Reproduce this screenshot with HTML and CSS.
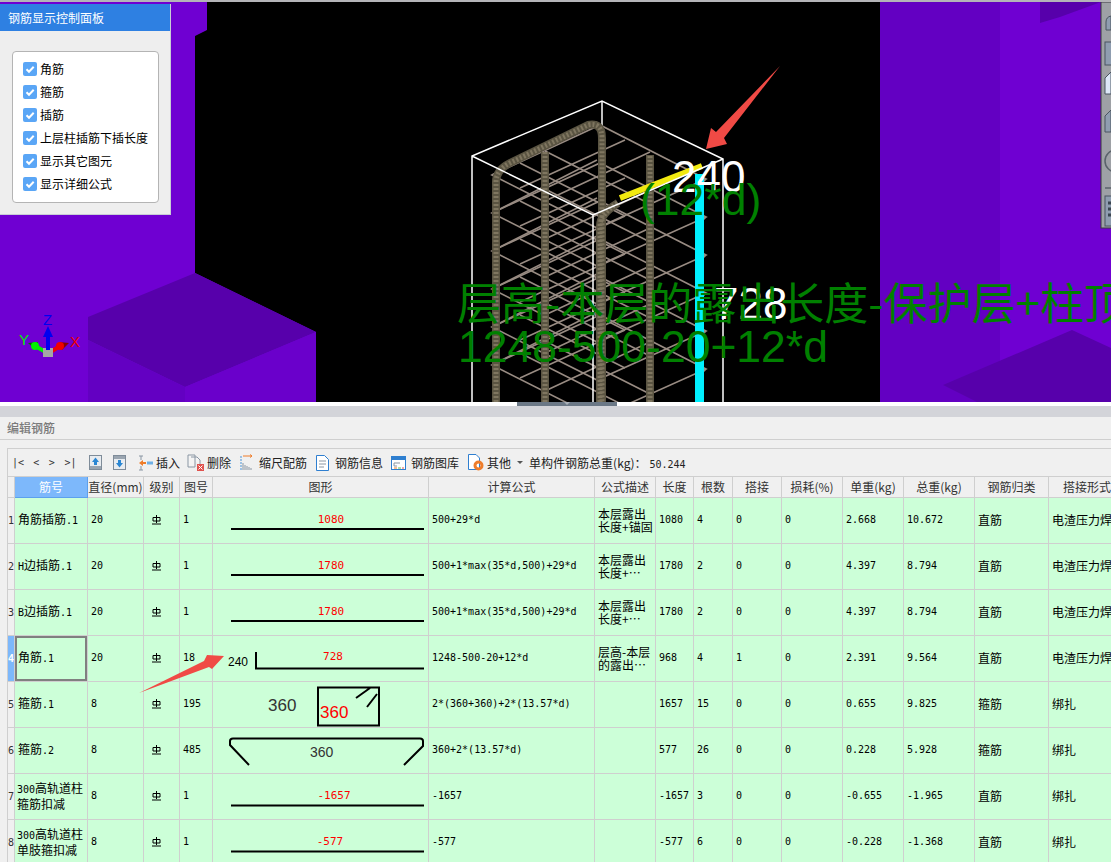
FILE: index.html
```html
<!DOCTYPE html>
<html lang="zh-CN">
<head>
<meta charset="utf-8">
<title>编辑钢筋</title>
<link rel="stylesheet" href="styles.css">
</head>
<body>
<div class="page">
  <svg class="defs" width="0" height="0" aria-hidden="true">
    <defs>
      <symbol id="grade" viewBox="0 0 9 10">
        <path d="M4.5 0V8M1 2.5H8V6H1ZM0 9H9" fill="none" stroke="#000" stroke-width="1"/>
      </symbol>
    </defs>
  </svg>

  <section class="viewport">
    <svg class="scene" viewBox="0 2 1111 400" width="1111" height="400">
      <defs>
        <g id="stirrup" fill="none" stroke="#998c83" stroke-width="1.6">
          <path d="M492 175L600 125L706 179L597 228Z"/>
          <path d="M545 151L650 204M650 152L545 201M520 163L625 216M625 140L520 188M492 175L597 122"/>
          <path d="M597 228V240M706 179l-4 4"/>
        </g>
      </defs>
      <rect class="s-purple" x="0" y="2" width="1111" height="400"/>
      <polygon class="s-deep" points="880,2 1000,2 1000,402 880,402"/>
      <polygon points="207,2 880,2 880,402 316,402 316,332 195,273 195,36 207,30"/>
      <polygon class="s-dark" points="195,273 316,332 185,387 88,340 88,317"/>
      <polygon class="s-deep" points="88,340 185,387 185,402 88,402"/>
      <polygon class="s-face" points="185,387 316,332 316,402 185,402"/>
      <polygon class="s-dark" points="943,385 1072,330 1111,348 1111,402 977,402"/>
      <polygon class="s-dark" points="1040,2 1101,2 1060,17 1040,23"/>

      <path class="wire" d="M602 101V132"/>
      <use href="#stirrup"/>
      <use href="#stirrup" y="38"/>
      <use href="#stirrup" y="76"/>
      <use href="#stirrup" y="114"/>
      <use href="#stirrup" y="152"/>
      <use href="#stirrup" y="190"/>

      <g class="bar-base">
        <path d="M496 402V182Q496 170 510 163L588 125Q602 122 602 138V402"/>
        <path d="M545 402V152"/>
        <path d="M650 402V155"/>
        <path d="M600 402V226Q600 214 618 203"/>
      </g>
      <g class="bar-rib">
        <path d="M496 402V182Q496 170 510 163L588 125Q602 122 602 138V402"/>
        <path d="M545 402V152"/>
        <path d="M650 402V155"/>
        <path d="M600 402V226Q600 214 618 203"/>
      </g>
      <rect class="s-cyan" x="695" y="174" width="9" height="228"/>
      <path class="s-yellow" d="M620 198L702 166"/>
      <path class="wire" d="M472 402V156L602 101L723 159V402M472 156L593 215L723 159M593 215V402"/>

      <text class="t-white" x="672" y="192">240</text>
      <text class="t-white" x="714" y="319">728</text>
      <text class="t-green" x="640" y="215">(12*d)</text>
      <text class="t-green t-cjk" x="457" y="320">层高-本层的露出长度-保护层+柱顶</text>
      <text class="t-green" x="458" y="362">1248-500-20+12*d</text>

      <polygon class="s-arrow" points="780,66 724,138 727,144 706,149 711,128 716,132"/>

      <polygon class="ax-g2" points="28,343 38,342 36,350"/>
      <path class="ax-gs" d="M35 346L44 351"/>
      <circle class="ax-g" cx="35" cy="346" r="4"/>
      <polygon class="ax-r2" points="69,343 59,342 62,350"/>
      <path class="ax-rs" d="M60 346L52 351"/>
      <circle class="ax-r" cx="60" cy="346" r="4"/>
      <rect class="ax-c" x="43" y="348" width="10" height="9"/>
      <rect class="ax-b" x="46" y="335" width="4" height="15"/>
      <polygon class="ax-b" points="48,326 53,337 43,337"/>
      <text class="ax-t ax-tb" x="43" y="325">Z</text>
      <text class="ax-t ax-tg" x="19" y="345">Y</text>
      <text class="ax-t ax-tr" x="70" y="347">X</text>

      <rect class="tool" x="1101" y="2" width="12" height="226"/>
      <g class="tool-i">
        <path d="M1106 30V22Q1106 17 1111 16V30Z"/>
        <rect x="1105" y="42" width="8" height="23"/>
        <path class="tool-l" d="M1105 94V78L1111 72V94Z"/>
        <path d="M1105 132V116L1111 110V132Z"/>
        <circle class="tool-c" cx="1116" cy="161" r="11"/>
        <path class="tool-c" d="M1105 188H1111"/>
        <rect x="1105" y="196" width="8" height="30"/>
        <path class="tool-d" d="M1108 203H1111M1108 209H1111M1108 215H1111"/>
      </g>
    </svg>

    <aside class="ctl">
      <h2 class="ctl-h">钢筋显示控制面板</h2>
      <div class="ctl-b">
        <div class="ctl-box">
          <label class="ck"><svg class="ck-i" viewBox="0 0 14 14"><rect width="14" height="14" rx="2"/><path d="M3.5 7.2L6 9.7L10.7 4.8"/></svg>角筋</label>
          <label class="ck"><svg class="ck-i" viewBox="0 0 14 14"><rect width="14" height="14" rx="2"/><path d="M3.5 7.2L6 9.7L10.7 4.8"/></svg>箍筋</label>
          <label class="ck"><svg class="ck-i" viewBox="0 0 14 14"><rect width="14" height="14" rx="2"/><path d="M3.5 7.2L6 9.7L10.7 4.8"/></svg>插筋</label>
          <label class="ck"><svg class="ck-i" viewBox="0 0 14 14"><rect width="14" height="14" rx="2"/><path d="M3.5 7.2L6 9.7L10.7 4.8"/></svg>上层柱插筋下插长度</label>
          <label class="ck"><svg class="ck-i" viewBox="0 0 14 14"><rect width="14" height="14" rx="2"/><path d="M3.5 7.2L6 9.7L10.7 4.8"/></svg>显示其它图元</label>
          <label class="ck"><svg class="ck-i" viewBox="0 0 14 14"><rect width="14" height="14" rx="2"/><path d="M3.5 7.2L6 9.7L10.7 4.8"/></svg>显示详细公式</label>
        </div>
      </div>
    </aside>
  </section>

  <div class="gap"><span class="grip"></span></div>
  <div class="splitter"></div>

  <section class="editor">
    <h3 class="ed-title">编辑钢筋</h3>
    <div class="frame">
      <div class="toolbar">
        <span class="nav"><span>|&lt;</span><span>&lt;</span><span>&gt;</span><span>&gt;|</span></span>
        <svg class="ic ic-up" width="13" height="15" viewBox="0 0 13 15"><rect x=".5" y=".5" width="12" height="14" fill="#e8ecf0" stroke="#7f8c99"/><rect x="1" y="11" width="11" height="3" fill="#9aa5b0"/><path d="M6.5 2.5L10 7H8V10H5V7H3Z" fill="#2b87d3"/></svg>
        <svg class="ic ic-down" width="13" height="15" viewBox="0 0 13 15"><rect x=".5" y=".5" width="12" height="14" fill="#e8ecf0" stroke="#7f8c99"/><rect x="1" y="1" width="11" height="3" fill="#9aa5b0"/><path d="M6.5 12.5L10 8H8V5H5V8H3Z" fill="#2b87d3"/></svg>
        <span class="tb tb-ins"><svg width="15" height="16" viewBox="0 0 15 16"><path d="M1 1H5M1 15H5M3 1V5M3 11V15" stroke="#8a96a3" fill="none"/><path d="M1 8L5 5V7H8V9H5V11Z" fill="#ee7d2b"/><rect x="9" y="6.5" width="6" height="3" fill="#6fb0e6"/></svg><span>插入</span></span>
        <span class="tb tb-del"><svg width="17" height="17" viewBox="0 0 17 17"><path d="M1 1H8V13H1ZM4 3H10L13 6V11" fill="#f4f4f4" stroke="#8a96a3"/><rect x="10" y="10" width="7" height="7" fill="#e0524d"/><path d="M11.500 11.500L15.500 15.500M15.500 11.500L11.500 15.500" stroke="#fff"/></svg><span>删除</span></span>
        <span class="tb tb-scale"><svg width="13" height="17" viewBox="0 0 13 17"><path d="M1 2V16" stroke="#4a93d6" stroke-dasharray="2 1" fill="none"/><path d="M3 2H12M10 0.500L12 2L10 3.500" stroke="#ee7d2b" fill="none"/><path d="M3 9V16M5 11V16M7 12V16M9 13V16M11 14V16" stroke="#8a96a3"/></svg><span>缩尺配筋</span></span>
        <span class="tb tb-info"><svg width="13" height="16" viewBox="0 0 13 16"><path d="M.5.5H8.5L12.5 4.500V15.500H.5Z" fill="#fff" stroke="#2f7fd0"/><path d="M3 6H10M3 9H10M3 12H8" stroke="#8a96a3"/></svg><span>钢筋信息</span></span>
        <span class="tb tb-lib"><svg width="15" height="14" viewBox="0 0 15 14"><rect x=".5" y=".5" width="14" height="13" fill="#fff" stroke="#2f7fd0"/><rect x="1" y="1" width="13" height="3" fill="#2f7fd0"/><path d="M3 7H9M3 7V10H6" stroke="#8a96a3" fill="none"/><path d="M3 12H6" stroke="#ee7d2b"/><path d="M7 12H10" stroke="#6cc04a"/><path d="M11 12H13" stroke="#e0524d"/></svg><span>钢筋图库</span></span>
        <span class="tb tb-oth"><svg width="16" height="17" viewBox="0 0 16 17"><path d="M.5.5H8L11.500 4V15.500H.5Z" fill="#fff" stroke="#2f7fd0"/><circle cx="10.500" cy="11.500" r="3.500" fill="none" stroke="#ee7d2b" stroke-width="3"/></svg><span>其他</span></span>
        <span class="caret"></span>
        <span class="tb-total">单构件钢筋总重(kg)：<span class="n tt-n">50.244</span></span>
      </div>

      <table class="grid">
        <colgroup>
          <col class="w0"><col class="w1"><col class="w2"><col class="w3"><col class="w4"><col class="w5"><col class="w6"><col class="w7"><col class="w8"><col class="w9"><col class="w10"><col class="w11"><col class="w12"><col class="w13"><col class="w14"><col class="w15">
        </colgroup>
        <thead>
          <tr>
            <th class="rh"></th><th class="active">筋号</th><th>直径(mm)</th><th>级别</th><th>图号</th><th>图形</th><th>计算公式</th><th>公式描述</th><th>长度</th><th>根数</th><th>搭接</th><th>损耗(%)</th><th>单重(kg)</th><th>总重(kg)</th><th>钢筋归类</th><th>搭接形式</th>
          </tr>
        </thead>
        <tbody>
          <tr>
            <td class="rh">1</td><td>角筋插筋<span class="n">.1</span></td><td class="n">20</td><td><svg class="grade"><use href="#grade"/></svg></td><td class="n">1</td>
            <td class="sh"><svg class="shape" viewBox="213 497 215 45"><text class="s-red" x="331" y="522">1080</text><path class="s-line" d="M231 528H424"/></svg></td>
            <td class="n">500+29*d</td><td class="ds">本层露出<br>长度+锚固</td><td class="n">1080</td><td class="n">4</td><td class="n">0</td><td class="n">0</td><td class="n">2.668</td><td class="n">10.672</td><td>直筋</td><td>电渣压力焊</td>
          </tr>
          <tr>
            <td class="rh">2</td><td><span class="n">H</span>边插筋<span class="n">.1</span></td><td class="n">20</td><td><svg class="grade"><use href="#grade"/></svg></td><td class="n">1</td>
            <td class="sh"><svg class="shape" viewBox="213 543 215 45"><text class="s-red" x="331" y="568">1780</text><path class="s-line" d="M231 574H424"/></svg></td>
            <td class="n">500+1*max(35*d,500)+29*d</td><td class="ds">本层露出<br>长度+…</td><td class="n">1780</td><td class="n">2</td><td class="n">0</td><td class="n">0</td><td class="n">4.397</td><td class="n">8.794</td><td>直筋</td><td>电渣压力焊</td>
          </tr>
          <tr>
            <td class="rh">3</td><td><span class="n">B</span>边插筋<span class="n">.1</span></td><td class="n">20</td><td><svg class="grade"><use href="#grade"/></svg></td><td class="n">1</td>
            <td class="sh"><svg class="shape" viewBox="213 589 215 45"><text class="s-red" x="331" y="614">1780</text><path class="s-line" d="M231 620H424"/></svg></td>
            <td class="n">500+1*max(35*d,500)+29*d</td><td class="ds">本层露出<br>长度+…</td><td class="n">1780</td><td class="n">2</td><td class="n">0</td><td class="n">0</td><td class="n">4.397</td><td class="n">8.794</td><td>直筋</td><td>电渣压力焊</td>
          </tr>
          <tr>
            <td class="rh rh-on">4</td><td class="sel">角筋<span class="n">.1</span></td><td class="n">20</td><td><svg class="grade"><use href="#grade"/></svg></td><td class="n">18</td>
            <td class="sh"><svg class="shape" viewBox="213 635 215 45"><text class="s-sm" x="228" y="665">240</text><text class="s-red" x="333" y="659">728</text><path class="s-line" d="M256 651V667.500H424"/></svg></td>
            <td class="n">1248-500-20+12*d</td><td class="ds">层高-本层<br>的露出…</td><td class="n">968</td><td class="n">4</td><td class="n">1</td><td class="n">0</td><td class="n">2.391</td><td class="n">9.564</td><td>直筋</td><td>电渣压力焊</td>
          </tr>
          <tr>
            <td class="rh">5</td><td>箍筋<span class="n">.1</span></td><td class="n">8</td><td><svg class="grade"><use href="#grade"/></svg></td><td class="n">195</td>
            <td class="sh"><svg class="shape" viewBox="213 681 215 45"><text class="s-big" x="268" y="710">360</text><text class="s-big s-bigred" x="320" y="717">360</text><path class="s-line" d="M318 686.500H379V724.500H318ZM356 697L370 687M367 706L377 693"/></svg></td>
            <td class="n">2*(360+360)+2*(13.57*d)</td><td></td><td class="n">1657</td><td class="n">15</td><td class="n">0</td><td class="n">0</td><td class="n">0.655</td><td class="n">9.825</td><td>箍筋</td><td>绑扎</td>
          </tr>
          <tr>
            <td class="rh">6</td><td>箍筋<span class="n">.2</span></td><td class="n">8</td><td><svg class="grade"><use href="#grade"/></svg></td><td class="n">485</td>
            <td class="sh"><svg class="shape" viewBox="213 727 215 45"><text class="s-mid" x="310" y="756">360</text><path class="s-line" d="M249 764L230 744V740Q230 737.500 233 737.500H420Q423 737.500 423 740V745L404 764"/></svg></td>
            <td class="n">360+2*(13.57*d)</td><td></td><td class="n">577</td><td class="n">26</td><td class="n">0</td><td class="n">0</td><td class="n">0.228</td><td class="n">5.928</td><td>箍筋</td><td>绑扎</td>
          </tr>
          <tr>
            <td class="rh">7</td><td class="two"><span class="n">300</span>高轨道柱<br>箍筋扣减</td><td class="n">8</td><td><svg class="grade"><use href="#grade"/></svg></td><td class="n">1</td>
            <td class="sh"><svg class="shape" viewBox="213 773 215 45"><text class="s-red" x="334" y="798">-1657</text><path class="s-line" d="M231 804.500H424"/></svg></td>
            <td class="n">-1657</td><td></td><td class="n">-1657</td><td class="n">3</td><td class="n">0</td><td class="n">0</td><td class="n">-0.655</td><td class="n">-1.965</td><td>直筋</td><td>绑扎</td>
          </tr>
          <tr>
            <td class="rh">8</td><td class="two"><span class="n">300</span>高轨道柱<br>单肢箍扣减</td><td class="n">8</td><td><svg class="grade"><use href="#grade"/></svg></td><td class="n">1</td>
            <td class="sh"><svg class="shape" viewBox="213 819 215 45"><text class="s-red" x="330" y="844">-577</text><path class="s-line" d="M231 850.500H424"/></svg></td>
            <td class="n">-577</td><td></td><td class="n">-577</td><td class="n">6</td><td class="n">0</td><td class="n">0</td><td class="n">-0.228</td><td class="n">-1.368</td><td>直筋</td><td>绑扎</td>
          </tr>
        </tbody>
      </table>
    </div>
    <svg class="callout" width="90" height="42" viewBox="0 0 90 42"><polygon points="0,41 65,9 68,3 85,4 73,17 70,15" fill="#f04a45"/></svg>
  </section>
</div>
</body>
</html>
```

FILE: styles.css
```css
* { box-sizing: border-box; }
html, body { margin: 0; padding: 0; }
body {
  width: 1111px;
  height: 862px;
  overflow: hidden;
  background: #f0f0f0;
  font-family: "Noto Sans CJK SC", "Liberation Sans", sans-serif;
  font-size: 12px;
  color: #000;
}
.page { width: 1111px; height: 862px; overflow: hidden; border-top: 2px solid #b4b4b8; }
.defs { position: absolute; }

/* 3D viewport */
.viewport { position: relative; height: 400px; background: #000; overflow: hidden; }
.scene { display: block; }
.s-purple { fill: #6f00d2; }
.s-deep { fill: #6300c2; }
.s-dark { fill: #5700ab; }
.s-face { fill: #6a00cb; }
.s-cyan { fill: #00f0ff; }
.s-yellow { stroke: #f2ea10; stroke-width: 6; fill: none; }
.s-arrow { fill: #f04a45; }
.wire { fill: none; stroke: #fff; stroke-width: 1.5; }
.bar-base { fill: none; stroke: #5a5442; stroke-width: 8; }
.bar-rib { fill: none; stroke: #7f7660; stroke-width: 5; stroke-dasharray: 2 2; }
.t-white { fill: #fff; font-family: "Liberation Sans", sans-serif; font-size: 44px; }
.t-green { fill: #008000; font-family: "Liberation Sans", sans-serif; font-size: 44.5px; }
.t-green.t-cjk { font-family: "Noto Sans CJK SC", sans-serif; font-size: 44px; }
.ax-g { fill: #00f000; }
.ax-g2 { fill: #007000; }
.ax-gs { stroke: #00f000; stroke-width: 4; }
.ax-r { fill: #f00000; }
.ax-r2 { fill: #8a0000; }
.ax-rs { stroke: #f00000; stroke-width: 4; }
.ax-c { fill: #a6a6a6; }
.ax-b { fill: #0000f0; }
.ax-t { font-family: "Liberation Sans", sans-serif; font-size: 15px; }
.ax-tb { fill: #0000f0; }
.ax-tg { fill: #00f000; }
.ax-tr { fill: #f00000; }
.tool { fill: #9ea1a6; stroke: #3a3a40; }
.tool-i > * { fill: #8f9db0; stroke: #4a5560; stroke-width: 1; }
.tool-i > .tool-l { fill: #dde8f8; }
.tool-i > .tool-c { fill: none; stroke: #5a626a; stroke-width: 1.5; }
.tool-i > .tool-d { fill: none; stroke: #3a4550; stroke-width: 3; stroke-dasharray: 3 2; }

/* floating control panel */
.ctl {
  position: absolute;
  left: 0;
  top: 2px;
  width: 171px;
  height: 211px;
  background: #eeeeee;
  border-right: 1px solid #c8ccd6;
  border-bottom: 1px solid #c8ccd6;
}
.ctl-h {
  margin: 0;
  height: 27px;
  padding: 0 8px;
  background: #2e80e2;
  color: #fff;
  font-size: 12px;
  font-weight: 400;
  line-height: 27px;
}
.ctl-b { padding: 20px 11px 0 12px; }
.ctl-box {
  height: 152px;
  display: flex;
  flex-direction: column;
  gap: 5px;
  padding: 8px 0 0 10px;
  background: #fff;
  border: 1px solid #b4b4b4;
  border-radius: 4px;
}
.ck { display: flex; align-items: center; gap: 3px; height: 18px; line-height: 18px; white-space: nowrap; }
.ck-i { width: 14px; height: 14px; flex: none; }
.ck-i rect { fill: #5aa6f6; }
.ck-i path { fill: none; stroke: #fff; stroke-width: 2; }

.gap { height: 4px; background: #fff; padding-left: 517px; }
.grip { display: flex; justify-content: center; width: 100px; height: 4px; background: #6b7886; }
.grip::after {
  content: "";
  width: 0;
  height: 0;
  border-left: 3px solid transparent;
  border-right: 3px solid transparent;
  border-top: 3px solid #a9b0b8;
}
.splitter { height: 11px; background: #d3d4d9; }

/* editor */
.editor { position: relative; height: 445px; background: #f0f0f0; }
.ed-title {
  margin: 0;
  height: 23px;
  padding-left: 7px;
  border-bottom: 1px solid #cfcfcf;
  color: #7a7a7a;
  font-size: 12px;
  font-weight: 500;
  line-height: 22px;
}
.frame {
  margin: 8px 0 0 7px;
  border-top: 1px solid #cfcfcf;
  border-left: 1px solid #cfcfcf;
  width: 1104px;
  overflow: hidden;
}
.toolbar {
  display: flex;
  align-items: center;
  height: 28px;
  border-bottom: 1px solid #cfcfcf;
  color: #222;
  padding-left: 4px;
  white-space: nowrap;
}
.toolbar svg { flex: none; display: block; }
.nav {
  display: flex;
  width: 68px;
  font-family: "DejaVu Sans Mono", monospace;
  font-size: 10px;
  color: #333;
}
.nav span { width: 17px; }
.nav span:first-child { width: 23px; }
.ic-up { margin-left: 9px; }
.ic-down { margin-left: 11px; }
.tb { display: flex; align-items: center; }
.tb-ins { margin-left: 12px; gap: 3px; }
.tb-del { margin-left: 7px; gap: 3px; }
.tb-scale { margin-left: 9px; gap: 6px; }
.tb-info { margin-left: 9px; gap: 6px; }
.tb-lib { margin-left: 8px; gap: 5px; }
.tb-oth { margin-left: 9px; gap: 3px; }
.caret {
  margin-left: 6px;
  width: 0;
  height: 0;
  border-left: 3px solid transparent;
  border-right: 3px solid transparent;
  border-top: 3px solid #555;
}
.tb-total { margin-left: 6px; }
.tt-n { margin-left: 3px; }

.n { font-family: "DejaVu Sans Mono", monospace; font-size: 10px; }

.grid { border-collapse: separate; border-spacing: 0; table-layout: fixed; width: 1118px; }
.w0 { width: 7px; }
.w1 { width: 73px; }
.w2 { width: 56px; }
.w3 { width: 36px; }
.w4 { width: 33px; }
.w5 { width: 216px; }
.w6 { width: 166px; }
.w7 { width: 61px; }
.w8 { width: 38px; }
.w9 { width: 39px; }
.w10 { width: 49px; }
.w11 { width: 61px; }
.w12 { width: 61px; }
.w13 { width: 71px; }
.w14 { width: 74px; }
.w15 { width: 77px; }
.grid th, .grid td {
  border-right: 1px solid #cfcfcf;
  border-bottom: 1px solid #cfcfcf;
  overflow: hidden;
  white-space: nowrap;
}
.grid th {
  height: 21px;
  padding: 0 0 1px;
  background: #f0f0f0;
  color: #333;
  font-size: 12px;
  font-weight: 400;
  text-align: center;
}
.grid th.active { background: #7db8fb; color: #fff; border-color: #5ba0ee; }
.grid td {
  height: 46px;
  padding: 0 3px 2px;
  background: #ccffd8;
  line-height: 14px;
  vertical-align: middle;
}
.grid td.rh, .grid th.rh { padding: 0; background: #f0f0f0; text-align: center; }
.grid td.rh { font-family: "DejaVu Sans Mono", monospace; font-size: 10px; color: #333; }
.grid td.rh-on { background: #7db8fb; color: #fff; font-weight: 700; }
.grid td.sel { box-shadow: inset 0 0 0 2px #808080; }
.grid td.sh { padding: 0; }
.grid td.two { padding-left: 2px; }
.grid td.ds { line-height: 13px; }
.shape { display: block; width: 215px; height: 45px; overflow: hidden; }
.grade { display: block; width: 9px; height: 10px; margin-left: 5px; }
.s-line { fill: none; stroke: #000; stroke-width: 2; }
.s-red { fill: #f00; font-family: "DejaVu Sans Mono", monospace; font-size: 11px; text-anchor: middle; }
.s-sm { fill: #000; font-family: "Liberation Sans", sans-serif; font-size: 12px; }
.s-big { fill: #333; font-family: "Liberation Sans", sans-serif; font-size: 17px; }
.s-big.s-bigred { fill: #f00; }
.s-mid { fill: #333; font-family: "Liberation Sans", sans-serif; font-size: 14px; }

.callout { position: absolute; left: 139px; top: 235px; pointer-events: none; }
```
